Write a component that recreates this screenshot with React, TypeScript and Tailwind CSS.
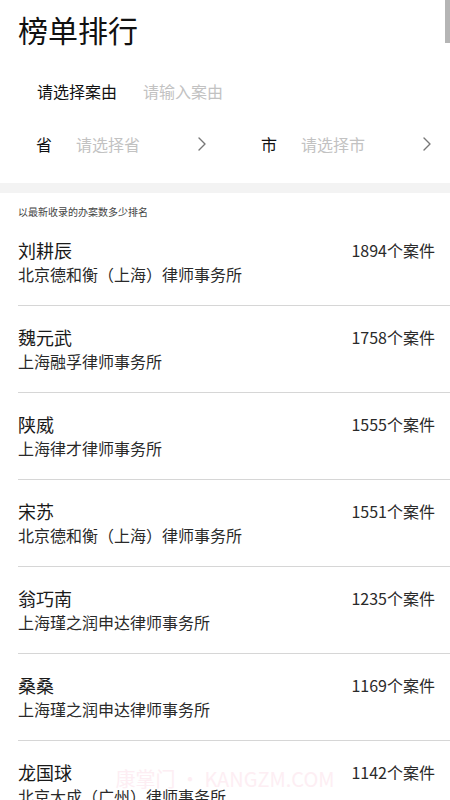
import React from 'react';

interface Lawyer {
  name: string;
  firm: string;
  count: number;
}

const lawyers: Lawyer[] = [
  { name: '刘耕辰', firm: '北京德和衡（上海）律师事务所', count: 1894 },
  { name: '魏元武', firm: '上海融孚律师事务所', count: 1758 },
  { name: '陕威', firm: '上海律才律师事务所', count: 1555 },
  { name: '宋苏', firm: '北京德和衡（上海）律师事务所', count: 1551 },
  { name: '翁巧南', firm: '上海瑾之润申达律师事务所', count: 1235 },
  { name: '桑桑', firm: '上海瑾之润申达律师事务所', count: 1169 },
  { name: '龙国球', firm: '北京大成（广州）律师事务所', count: 1142 },
];

const Chevron = () => (
  <svg width="8" height="14" viewBox="0 0 8 14" fill="none">
    <polyline points="1,1 7,7 1,13" stroke="#777" strokeWidth="1.4" strokeLinecap="round" strokeLinejoin="round" />
  </svg>
);

const Picker = ({ label, placeholder }: { label: string; placeholder: string }) => (
  <div className="flex items-center h-full">
    <span className="text-[16px] text-[#111] w-[40px]">{label}</span>
    <span className="text-[16px] text-[#c2c2c2] w-[122px]">{placeholder}</span>
    <Chevron />
  </div>
);

export default function App() {
  return (
    <div
      className="relative w-[450px] h-[800px] overflow-hidden bg-white"
      style={{ fontFamily: '"Noto Sans CJK SC", "Noto Sans", sans-serif' }}
    >
      {/* scrollbar thumb */}
      <div className="absolute right-0 top-0 w-[5px] h-[43px] bg-[#b5b5b5]" />

      <div className="h-[64px] flex items-center pl-[18px] pb-[6px]">
        <h1 className="text-[30px] leading-none text-[#111]">榜单排行</h1>
      </div>

      <div className="h-[58px] flex items-center pl-[37px] gap-[26px] pb-[4px]">
        <span className="text-[16px] text-[#111]">请选择案由</span>
        <span className="text-[16px] text-[#c2c2c2]">请输入案由</span>
      </div>

      <div className="h-[46px] flex pl-[36px] pb-[2px]">
        <div className="w-[225px]">
          <Picker label="省" placeholder="请选择省" />
        </div>
        <Picker label="市" placeholder="请选择市" />
      </div>

      <div className="mt-[15px] h-[10px] bg-[#f3f3f3]" />

      <div className="pt-[12px] pl-[18px]">
        <p className="h-[14px] text-[10px] leading-[14px] text-[#444]">以最新收录的办案数多少排名</p>

        <ul>
          {lawyers.map((l) => (
            <li key={l.name} className="pt-[19px] pb-[19px] pr-[15px] border-b border-[#d6d6d6] flex justify-between">
              <div>
                <div className="h-[24px] leading-[24px] text-[18px] text-[#1a1a1a]">{l.name}</div>
                <div className="h-[24px] leading-[24px] text-[16px] text-[#2a2a2a]">{l.firm}</div>
              </div>
              <div className="h-[24px] leading-[24px] text-[16px] text-[#2a2a2a]">{l.count}个案件</div>
            </li>
          ))}
        </ul>
      </div>

      {/* watermark */}
      <div className="absolute left-0 right-0 top-[764px] text-center text-[20px] text-[#fdeef3] pointer-events-none">
        康掌门 • KANGZM.COM
      </div>
    </div>
  );
}
